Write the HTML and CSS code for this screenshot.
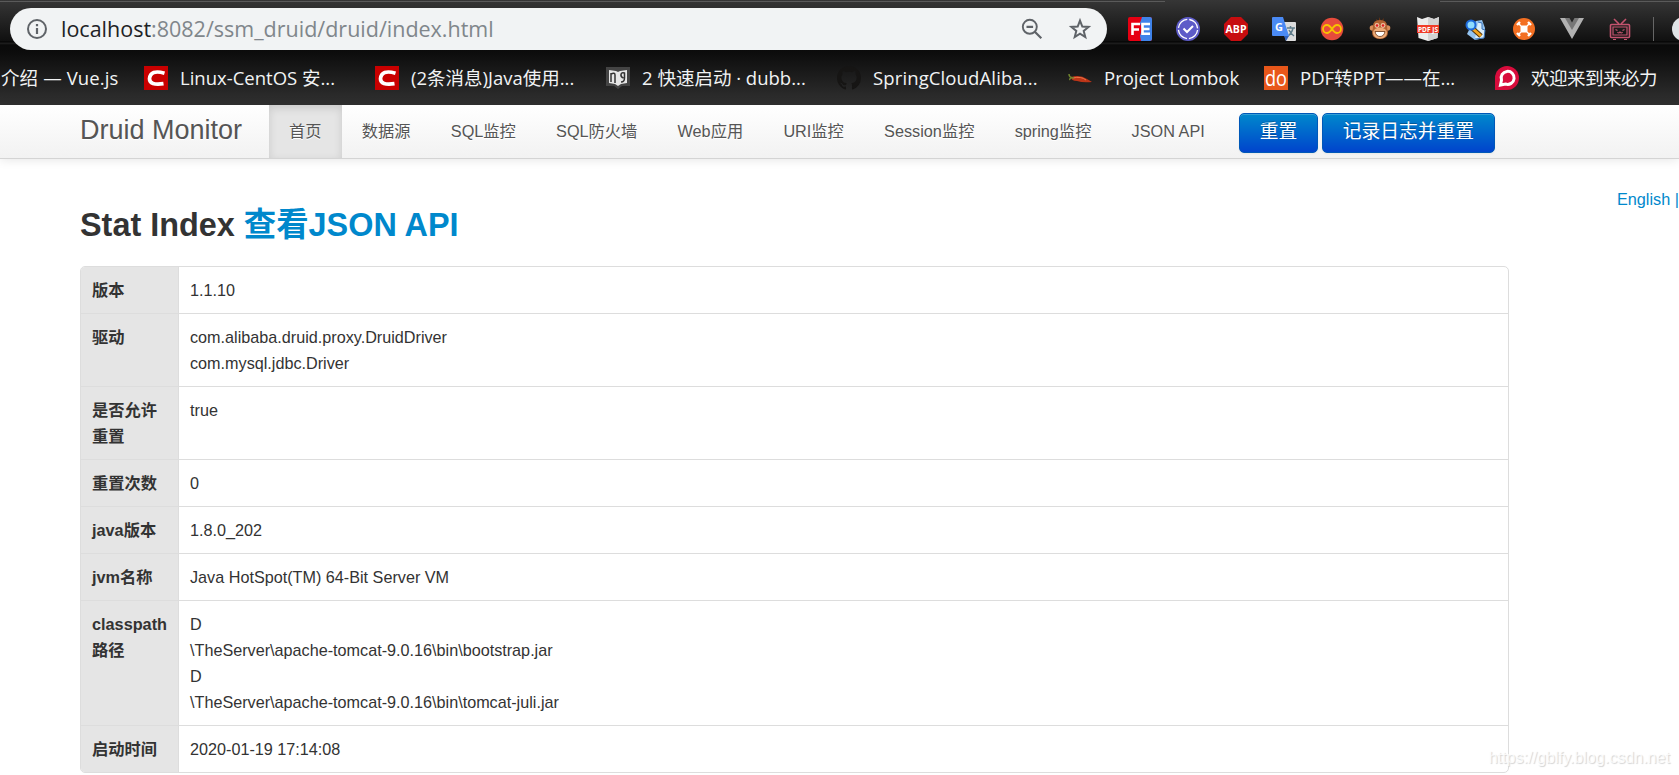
FILE: index.html
```html
<!DOCTYPE html>
<html lang="zh-CN">

<head>
    <meta charset="UTF-8">
    <title>Druid Stat Index</title>
    <link rel="stylesheet" href="styles.css">
</head>

<body>
    <div class="browser">
        <div class="tabs-edge"><span class="edge-left"></span><span class="edge-right"></span></div>
        <div class="toolbar">
            <div class="address">
                <svg class="icon-info" viewBox="0 0 22 22">
                    <circle cx="11" cy="11" r="9" fill="none" stroke="#5f6368" stroke-width="2" />
                    <path d="M11 10v6M11 6v2.2" stroke="#5f6368" stroke-width="2.2" />
                </svg>
                <span class="url"><b>localhost</b>:8082/ssm_druid/druid/index.html</span>
                <svg class="icon-zoom" viewBox="0 0 22 22">
                    <circle cx="8.8" cy="8.8" r="7" fill="none" stroke="#5f6368" stroke-width="1.9" />
                    <path d="M5.5 8.8h6.6M13.8 13.8l6.5 6.5" stroke="#5f6368" stroke-width="2.2" />
                </svg>
                <svg class="icon-star" viewBox="0 0 22 22">
                    <path d="M11 2.6l2.3 5.9 6.3.4-4.9 4 1.6 6.2-5.3-3.4-5.3 3.4 1.6-6.2-4.9-4 6.3-.4z" fill="none" stroke="#5f6368" stroke-width="2" />
                </svg>
            </div>
            <div class="extensions">
                <svg viewBox="0 0 24 24">
                    <rect width="24" height="24" rx="2" fill="#e60012" />
                    <path d="M14 0h8q2 0 2 2v20q0 2-2 2h-9l-1-5 2-7-2-6z" fill="#3f83ea" />
                    <path d="M4.500 18V7H12M4.500 12.500H11M22 7H14.500V16.800H22M14.500 12H21.500" fill="none" stroke="#fff" stroke-width="2.600" />
                </svg>
                <svg viewBox="0 0 24 24">
                    <circle cx="12" cy="12" r="12" fill="#5d5bc8" />
                    <circle cx="12" cy="12" r="9.600" fill="none" stroke="#fff" stroke-width="1.300" stroke-dasharray="13 2.080" stroke-dashoffset="-1" />
                    <path d="M7.500 11.500l3.500 3.500 6-6" fill="none" stroke="#fff" stroke-width="2" />
                </svg>
                <svg viewBox="0 0 24 24">
                    <path d="M7 0h10l7 7v10l-7 7H7l-7-7V7z" fill="#c70d0f" />
                    <text x="12" y="16.300" class="abp" textLength="21">ABP</text>
                </svg>
                <svg viewBox="0 0 24 24">
                    <path d="M9 5h14q1 0 1 1v17q0 1-1 1H14z" fill="#dcdcdc" />
                    <path d="M15 11h8M18.500 9v2M21 11q-1 5-5 8M17 13q2 4 5 6" fill="none" stroke="#607d8b" stroke-width="1.500" />
                    <path d="M1 0h10l6 19H1q-1 0-1-1V1q0-1 1-1z" fill="#4a8af4" />
                    <path d="M12 19h5l-3 5z" fill="#3061bc" />
                    <text x="7" y="14" class="g">G</text>
                </svg>
                <svg viewBox="0 0 24 24">
                    <circle cx="12" cy="12" r="11.300" fill="#e64b3c" />
                    <path d="M12 12c-2-3-3.500-4-5-4a4 4 0 0 0 0 8c1.500 0 3-1 5-4s3.500-4 5-4a4 4 0 0 1 0 8c-1.500 0-3-1-5-4z" fill="none" stroke="#f8c300" stroke-width="1.800" />
                </svg>
                <svg viewBox="0 0 24 24">
                    <path d="M9 5l-1-3 3 2V0l2 4 3-3-1 4z" fill="#6b3515" />
                    <circle cx="4.500" cy="11" r="2.800" fill="#d9905b" />
                    <circle cx="19.500" cy="11" r="2.800" fill="#d9905b" />
                    <path d="M12 3q7 0 7 6 0 3 1 6 0 7-8 7t-8-7q1-3 1-6 0-6 7-6z" fill="#b26331" />
                    <ellipse cx="12" cy="16" rx="7" ry="5.500" fill="#edac79" />
                    <circle cx="9" cy="8.500" r="2.400" fill="#f0c1a0" />
                    <circle cx="15" cy="8.500" r="2.400" fill="#f0c1a0" />
                    <circle cx="9" cy="8.500" r="1.300" fill="#e02020" />
                    <circle cx="15" cy="8.500" r="1.300" fill="#e02020" />
                    <path d="M7 14.500h10q-1 5-5 5t-5-5z" fill="#fff" stroke="#6b3515" stroke-width=".8" />
                </svg>
                <svg viewBox="0 0 24 24">
                    <path d="M1 0l5 2 6-2 6 2 5-2-1.500 21L12 24 2.500 21z" fill="#ececec" />
                    <path d="M12 0l6 2 5-2-1.500 21L12 24z" fill="#d3d3d3" />
                    <rect x="1" y="8" width="22" height="8" fill="#f03c28" />
                    <text x="12" y="14.700" class="pdf" textLength="20">PDF JS</text>
                </svg>
                <svg viewBox="0 0 24 24">
                    <path d="M12 4l6-1 3 8-1 10-9 2-8-6 3-6z" fill="#94c3ef" />
                    <path d="M14 5l4 1v6l3 1-1 8-9 1" fill="#d8edfb" stroke="#3872b8" />
                    <path d="M8 11l9 8" stroke="#50320a" stroke-width="5" />
                    <path d="M8 11l9 8" stroke="#f3a51f" stroke-width="3" />
                    <circle cx="7" cy="8" r="4.500" fill="#8fdcff" stroke="#1d69da" stroke-width="2" />
                </svg>
                <svg viewBox="0 0 24 24">
                    <circle cx="12" cy="12" r="11" fill="#f36f22" />
                    <rect x="8.500" y="8.500" width="7" height="7" rx="1" fill="#fff" />
                    <path d="M9 9L6.500 6.500M15 9l2.500-2.500M9 15l-2.500 2.500M15 15l2.500 2.500" stroke="#fff" stroke-width="1.400" />
                    <path d="M5 8L8 5M16 5L19 8M5 16L8 19M16 19l3-3" stroke="#fff" stroke-width="2.400" />
                </svg>
                <svg viewBox="0 0 24 24">
                    <path d="M0 1h7l5 9 5-9h7L12 22z" fill="#b1b1b1" />
                    <path d="M5 1h4.500L12 5.500 14.500 1H19l-7 12z" fill="#777" />
                </svg>
                <svg viewBox="0 0 24 24">
                    <g fill="none" stroke="#c4546f" stroke-width="1.600">
                        <path d="M6 2l5 5M18 2l-5 5" />
                        <rect x="2.500" y="7.500" width="19" height="13" rx="1" />
                        <path d="M5 10h14v8H5zM5 22.500h3M16 22.500h3M7.500 12.500l2 1M16.500 12.500l-2 1M9.500 15q1.300 2 2.500 0 1.300 2 2.500 0" stroke-width="1.200" />
                    </g>
                </svg>
                <span class="divider"></span>
                <span class="avatar"></span>
            </div>
        </div>

        <div class="bookmarks">
            <div class="bookmark first"><span class="bm-intro">介绍 — Vue.js</span></div>
            <div class="bookmark">
                <svg viewBox="0 0 24 24">
                    <rect width="24" height="24" fill="#c90000" />
                    <path d="M20.500 7.200q-14-4-15 5.500 0 7 14 5" fill="none" stroke="#fff" stroke-width="3.700" />
                </svg>
                <span>Linux-CentOS 安...</span>
            </div>
            <div class="bookmark">
                <svg viewBox="0 0 24 24">
                    <rect width="24" height="24" fill="#c90000" />
                    <path d="M20.500 7.200q-14-4-15 5.500 0 7 14 5" fill="none" stroke="#fff" stroke-width="3.700" />
                </svg>
                <span>(2条消息)Java使用...</span>
            </div>
            <div class="bookmark">
                <svg viewBox="0 0 24 24">
                    <path d="M0 1h24v19h-8l-4 3-4-3H0z" fill="#444" />
                    <path d="M3 4l7 1 2 1 2-1 7-1v13l-6 1-3 2-3-2-6-1z" fill="#e6e6e6" />
                    <path d="M5 7v9M5 8q4-2 4 1v8M17.500 12q-3-1-2.500-3.500t3.500-1.500v5q0 4-3.500 4" fill="none" stroke="#333" stroke-width="1.500" />
                </svg>
                <span>2 快速启动 · dubb...</span>
            </div>
            <div class="bookmark">
                <svg viewBox="0 0 16 16">
                    <path fill="#161514" d="M8 0C3.580 0 0 3.580 0 8c0 3.540 2.290 6.530 5.470 7.590.4.070.55-.17.55-.38 0-.19-.01-.82-.01-1.490-2.010.37-2.530-.49-2.690-.94-.09-.23-.48-.94-.82-1.130-.28-.15-.68-.52-.01-.53.63-.01 1.080.58 1.230.82.72 1.210 1.870.87 2.330.66.07-.52.28-.87.51-1.070-1.780-.2-3.640-.89-3.640-3.950 0-.87.31-1.590.82-2.150-.08-.2-.36-1.020.08-2.120 0 0 .67-.21 2.200.82.64-.18 1.320-.27 2-.27s1.360.09 2 .27c1.530-1.040 2.200-.82 2.200-.82.44 1.100.16 1.920.08 2.120.51.56.82 1.270.82 2.150 0 3.070-1.870 3.750-3.650 3.950.29.25.54.73.54 1.480 0 1.070-.01 1.930-.01 2.200 0 .21.15.46.55.38A8 8 0 0 0 16 8c0-4.420-3.580-8-8-8z" />
                </svg>
                <span class="bm-cloud">SpringCloudAliba...</span>
            </div>
            <div class="bookmark lombok">
                <svg viewBox="0 0 24 24">
                    <path d="M3 11q9-3 16 2l5 3q-9 1-15-1-6 0-6-4z" fill="#bd3518" />
                    <path d="M5 12q8-2 13 2" fill="none" stroke="#ee7447" />
                    <path d="M1 8q0 4 5 4M2 14q-1-1 2-3" fill="none" stroke="#71852e" stroke-width="1.500" />
                </svg>
                <span>Project Lombok</span>
            </div>
            <div class="bookmark">
                <svg viewBox="0 0 24 24">
                    <rect width="24" height="24" fill="#e8571a" />
                    <text x="12" y="19.500" class="do" textLength="22" lengthAdjust="spacingAndGlyphs">do</text>
                </svg>
                <span>PDF转PPT——在...</span>
            </div>
            <div class="bookmark">
                <svg viewBox="0 0 24 24">
                    <path d="M0 24V12a12 12 0 1 1 12 12z" fill="#d80c3c" />
                    <path d="M5.500 19l1-5a6.500 6.500 0 1 1 4 4z" fill="none" stroke="#fff" stroke-width="3" />
                </svg>
                <span class="bm-livere">欢迎来到来必力</span>
            </div>
        </div>
    </div>

    <div class="navbar">
        <a class="brand">Druid Monitor</a>
        <ul class="nav">
            <li class="active"><a>首页</a></li>
            <li><a>数据源</a></li>
            <li><a>SQL监控</a></li>
            <li><a>SQL防火墙</a></li>
            <li><a>Web应用</a></li>
            <li><a>URI监控</a></li>
            <li><a>Session监控</a></li>
            <li><a>spring监控</a></li>
            <li><a>JSON API</a></li>
        </ul>
        <div class="btn-group">
            <button>重置</button>
            <button>记录日志并重置</button>
        </div>
    </div>

    <div class="main">
        <div class="container">
            <h3>Stat Index <a>查看JSON API</a></h3>
            <table class="table">
                <tr>
                    <th>版本</th>
                    <td>1.1.10</td>
                </tr>
                <tr>
                    <th>驱动</th>
                    <td>com.alibaba.druid.proxy.DruidDriver<br>com.mysql.jdbc.Driver</td>
                </tr>
                <tr>
                    <th>是否允许重置</th>
                    <td>true</td>
                </tr>
                <tr>
                    <th>重置次数</th>
                    <td>0</td>
                </tr>
                <tr>
                    <th>java版本</th>
                    <td>1.8.0_202</td>
                </tr>
                <tr>
                    <th>jvm名称</th>
                    <td>Java HotSpot(TM) 64-Bit Server VM</td>
                </tr>
                <tr>
                    <th>classpath路径</th>
                    <td>D<br>\TheServer\apache-tomcat-9.0.16\bin\bootstrap.jar<br>D<br>\TheServer\apache-tomcat-9.0.16\bin\tomcat-juli.jar</td>
                </tr>
                <tr>
                    <th>启动时间</th>
                    <td>2020-01-19 17:14:08</td>
                </tr>
            </table>
        </div>
        <div class="lang"><a>English</a> |</div>
    </div>

    <div class="watermark">https://gblfy.blog.csdn.net</div>
</body>

</html>
```

FILE: styles.css
```css
* {
    box-sizing: border-box;
}

body {
    margin: 0;
    width: 1679px;
    height: 775px;
    overflow: hidden;
    position: relative;
    background: #fff;
    color: #333;
    font: 16.25px/26px "Liberation Sans", Arial, "Noto Sans CJK SC", sans-serif;
}

svg {
    display: block;
    flex: none;
    overflow: visible;
}

/* 浏览器顶部 */
.browser {
    height: 105px;
    background: linear-gradient(#363636, #101010 41px, #000 42px, #222 43px, #0a0a0a 45px, #0c0c0c 52px, #303030 104px);
    font-family: "Open Sans", "Noto Sans CJK SC", sans-serif;
}

.tabs-edge {
    height: 2px;
    padding-top: 1px;
    display: flex;
    justify-content: space-between;
}

.edge-left {
    width: 1165px;
    background: #5a5a5a;
}

.edge-right {
    width: 239px;
    background: #5a5a5a;
}

.toolbar {
    height: 48px;
    padding: 6px 0 0 10px;
    display: flex;
}

.address {
    width: 1097px;
    height: 42px;
    padding: 0 16px 0 16px;
    border-radius: 21px;
    background: #f1f3f4;
    display: flex;
    align-items: center;
}

.icon-info,
.icon-zoom,
.icon-star {
    width: 22px;
    height: 22px;
}

.url {
    flex: 1;
    margin-left: 13px;
    font-size: 21.5px;
    line-height: 40px;
    color: #80868b;
}

.url b {
    font-weight: normal;
    color: #202124;
}

.icon-star {
    margin-left: 26px;
}

.extensions {
    flex: 1;
    height: 24px;
    margin: 9px 0 0 21px;
    display: flex;
    gap: 24px;
    overflow: hidden;
}

.extensions svg {
    width: 24px;
    height: 24px;
}

.divider {
    flex: none;
    width: 1px;
    margin-left: -3px;
    background: #666;
}

.avatar {
    flex: none;
    width: 24px;
    margin-left: -6px;
    border-radius: 50%;
    background: #dfe3e6;
}

.abp {
    font: bold 10.5px "Open Sans", sans-serif;
    fill: #fff;
    text-anchor: middle;
}

.g {
    font: bold 11px "Open Sans", sans-serif;
    fill: #fff;
    text-anchor: middle;
}

.pdf {
    font: bold 6.5px "Open Sans", sans-serif;
    fill: #fff;
    text-anchor: middle;
}

.do {
    font: 22px "Open Sans", sans-serif;
    fill: #fff;
    text-anchor: middle;
}

.bookmarks {
    display: flex;
    padding-top: 9px;
    height: 55px;
    overflow: hidden;
}

.bookmark {
    flex: none;
    width: 231px;
    height: 37px;
    display: flex;
    align-items: center;
    gap: 12px;
    color: #f1f3f4;
    font-size: 18.5px;
    white-space: nowrap;
}

.bookmark.first {
    width: 144px;
    padding-left: 1px;
}

.bookmark.lombok {
    width: 196px;
}

.bm-intro,
.bm-cloud {
    letter-spacing: 0.12px;
}

.bm-livere {
    letter-spacing: -0.5px;
}

.bookmark svg {
    width: 24px;
    height: 24px;
}

/* 导航栏 */
.navbar {
    height: 54px;
    padding-left: 80px;
    display: flex;
    background: linear-gradient(#fff, #f2f2f2);
    border-bottom: 1px solid #d4d4d4;
    box-shadow: 0 1px 10px rgba(0, 0, 0, 0.1);
    text-shadow: 0 1px 0 #fff;
    color: #555;
}

.brand {
    width: 189px;
    font-size: 27px;
    line-height: 50px;
}

.nav {
    display: flex;
    margin: 0;
    padding: 0;
    list-style: none;
}

.nav li {
    padding: 13px 20.12px 14px;
    white-space: nowrap;
}

.nav .active {
    background: #e5e5e5;
    box-shadow: inset 0 3px 8px rgba(0, 0, 0, 0.125);
}

.btn-group {
    display: flex;
    gap: 4px;
    margin: 8px 0 0 14px;
}

button {
    height: 40px;
    padding: 0 19.8px 2px;
    border: 1px solid #0058b8;
    border-radius: 5px;
    background: linear-gradient(#0088cc, #0044cc);
    box-shadow: inset 0 1px 0 rgba(255, 255, 255, 0.2), 0 1px 2px rgba(0, 0, 0, 0.05);
    color: #fff;
    font: 18.75px/26px "Liberation Sans", "Noto Sans CJK SC", sans-serif;
    text-shadow: 0 -1px 0 rgba(0, 0, 0, 0.25);
    white-space: nowrap;
}

/* 内容 */
.main {
    display: flex;
    padding-left: 80px;
}

.container {
    width: 1430.5px;
    padding-top: 41px;
}

h3 {
    margin: 0 0 16px;
    font-size: 32.4px;
    line-height: 50px;
}

a {
    text-decoration: none;
}

.main a {
    color: #0088cc;
}

.table {
    width: 100%;
    border: 1px solid #ddd;
    border-radius: 5px;
    border-spacing: 0;
    overflow: hidden;
}

th,
td {
    padding: 10px 11px;
    text-align: left;
    vertical-align: top;
    border-top: 1px solid #ddd;
}

tr:first-child th,
tr:first-child td {
    border-top: 0;
}

th {
    width: 97px;
    background: #e5e5e5;
}

td {
    border-left: 1px solid #ddd;
    font-size: 16.2px;
}

.lang {
    margin: 27px 0 0 107.5px;
    color: #0088cc;
    white-space: nowrap;
}

.watermark {
    position: absolute;
    right: 9px;
    bottom: 5px;
    font-size: 16.1px;
    color: rgba(255, 255, 255, 0.8);
    text-shadow: 1px 1px 1px #d4d4d4;
}
```
